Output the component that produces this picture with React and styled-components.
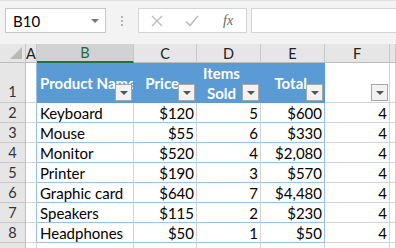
import React from 'react';
import styled, { createGlobalStyle } from 'styled-components';

const GlobalStyle = createGlobalStyle`
  html, body {
    margin: 0;
    background: #fff;
    overflow: hidden;
    font-family: Lato, "Liberation Sans", sans-serif;
  }
`;

const columnWidths = [26, 11, 97, 63, 64, 64, 65];

const rows = [
  ['Keyboard', '$120', 5, '$600', 4],
  ['Mouse', '$55', 6, '$330', 4],
  ['Monitor', '$520', 4, '$2,080', 4],
  ['Printer', '$190', 3, '$570', 4],
  ['Graphic card', '$640', 7, '$4,480', 4],
  ['Speakers', '$115', 2, '$230', 4],
  ['Headphones', '$50', 1, '$50', 4],
];

const Toolbar = styled.div`
  height: 44px;
  background: #f3f3f3;
  border-top: 1px solid #e2e2e2;
  box-sizing: border-box;
  display: flex;
  align-items: flex-start;
  padding: 7px 0 0 5px;
`;

const NameBox = styled.div`
  width: 101px;
  height: 25px;
  box-sizing: border-box;
  background: #fff;
  border: 1px solid #c6c6c6;
  display: flex;
  align-items: center;
  justify-content: space-between;
  padding: 0 6px 0 7px;
  font-size: 15px;
  color: #000;
`;

const SmallCaret = styled.span`
  width: 0;
  height: 0;
  border-left: 4px solid transparent;
  border-right: 4px solid transparent;
  border-top: 4px solid #777;
`;

const Dots = styled.div`
  width: 32px;
  height: 25px;
  display: flex;
  flex-direction: column;
  align-items: center;
  justify-content: center;
  gap: 2px;

  span {
    width: 2px;
    height: 2px;
    background: #b4b4b4;
  }
`;

const ActionBox = styled.div`
  width: 109px;
  height: 25px;
  box-sizing: border-box;
  background: #fff;
  border: 1px solid #d4d4d4;
  display: flex;
  align-items: center;
  padding-left: 12px;
  gap: 22px;
`;

const Fx = styled.span`
  font-family: "Liberation Serif", serif;
  font-style: italic;
  font-size: 14px;
  color: #666;
  margin-left: 2px;
`;

const FormulaInput = styled.div`
  flex: 1;
  height: 25px;
  margin-left: 4px;
  box-sizing: border-box;
  background: #fff;
  border: 1px solid #d4d4d4;
  border-right: none;
`;

const Sheet = styled.div`
  display: grid;
  grid-template-columns: ${columnWidths.map((w) => w + 'px').join(' ')} 1fr;
  grid-template-rows: 19px 40px repeat(8, 20px);
  overflow: hidden;
`;

const ColHead = styled.div`
  box-sizing: border-box;
  background: ${(p) => (p.$active ? '#d2d2d2' : '#e6e6e6')};
  color: ${(p) => (p.$active ? '#1e6b41' : '#222')};
  border-right: 1px solid #c8c8c8;
  border-bottom: ${(p) => (p.$active ? '2px solid #217346' : '1px solid #bdbdbd')};
  display: flex;
  align-items: center;
  justify-content: center;
  font-size: 14.5px;
  position: relative;
`;

const Corner = styled(ColHead)`
  &::after {
    content: '';
    position: absolute;
    right: 3px;
    bottom: 3px;
    width: 0;
    height: 0;
    border-left: 12px solid transparent;
    border-bottom: 12px solid #b9b9b9;
  }
`;

const RowHead = styled.div`
  box-sizing: border-box;
  background: #e6e6e6;
  color: #333;
  border-right: 1px solid #bdbdbd;
  border-bottom: 1px solid #c8c8c8;
  display: flex;
  align-items: ${(p) => (p.$tall ? 'flex-end' : 'center')};
  padding-bottom: ${(p) => (p.$tall ? '2px' : '0')};
  justify-content: center;
  font-size: 14.5px;
`;

const Cell = styled.div`
  box-sizing: border-box;
  position: relative;
  background: ${(p) => (p.$header ? '#5b9bd5' : '#fff')};
  color: ${(p) => (p.$header ? '#fff' : '#000')};
  font-weight: ${(p) => (p.$header ? 700 : 400)};
  font-size: 15px;
  line-height: 20px;
  white-space: ${(p) => (p.$wrap ? 'normal' : 'nowrap')};
  overflow: hidden;
  border-right: 1px solid ${(p) => (p.$header ? '#5b9bd5' : p.$edge ? '#9bc2e6' : '#d4d4d4')};
  border-bottom: 1px solid ${(p) => (p.$header ? '#5b9bd5' : p.$table ? '#9bc2e6' : '#d4d4d4')};
  display: flex;
  align-items: center;
  justify-content: ${(p) => p.$align || 'flex-start'};
  text-align: ${(p) => (p.$align === 'center' ? 'center' : 'left')};
  padding: 0 ${(p) => p.$padRight ?? 2}px 0 3px;
`;

const FilterButton = styled.span`
  position: absolute;
  z-index: 1;
  right: 1px;
  bottom: 1px;
  width: 17px;
  height: 17px;
  box-sizing: border-box;
  background: #f2f2f2;
  border: 1px solid #a6a6a6;
  display: flex;
  align-items: center;
  justify-content: center;

  &::after {
    content: '';
    border-left: 4px solid transparent;
    border-right: 4px solid transparent;
    border-top: 4px solid #555;
    margin-top: 1px;
  }
`;

const CrossIcon = () => (
  <svg width="12" height="12" viewBox="0 0 12 12">
    <path d="M1 1 L11 11 M11 1 L1 11" stroke="#bdbdbd" strokeWidth="1.4" fill="none" />
  </svg>
);

const CheckIcon = () => (
  <svg width="14" height="12" viewBox="0 0 14 12">
    <path d="M1 6.5 L5 10.5 L13 1" stroke="#bdbdbd" strokeWidth="1.6" fill="none" />
  </svg>
);

// left-aligned header runs under its filter button, as in Excel
const headers = [
  { label: 'Product Name', align: 'flex-start', pad: 0 },
  { label: 'Price', align: 'flex-end', pad: 17 },
  { label: 'Items Sold', align: 'center', wrap: true, pad: 17 },
  { label: 'Total', align: 'flex-end', pad: 17 },
];

const App = () => {
  return (
    <>
      <GlobalStyle />
      <Toolbar>
        <NameBox>
          B10
          <SmallCaret />
        </NameBox>
        <Dots>
          <span />
          <span />
          <span />
        </Dots>
        <ActionBox>
          <CrossIcon />
          <CheckIcon />
          <Fx>fx</Fx>
        </ActionBox>
        <FormulaInput />
      </Toolbar>
      <Sheet>
        <Corner />
        <ColHead>A</ColHead>
        <ColHead $active>B</ColHead>
        <ColHead>C</ColHead>
        <ColHead>D</ColHead>
        <ColHead>E</ColHead>
        <ColHead>F</ColHead>
        <ColHead />

        <RowHead $tall>1</RowHead>
        <Cell $edge />
        {headers.map((h) => (
          <Cell key={h.label} $header $align={h.align} $wrap={h.wrap} $padRight={h.pad}>
            {h.label}
            <FilterButton />
          </Cell>
        ))}
        <Cell>
          <FilterButton />
        </Cell>
        <Cell />

        {rows.map((r, i) => (
          <React.Fragment key={r[0]}>
            <RowHead>{i + 2}</RowHead>
            <Cell $edge />
            <Cell $table>{r[0]}</Cell>
            <Cell $table $align="flex-end">{r[1]}</Cell>
            <Cell $table $align="flex-end">{r[2]}</Cell>
            <Cell $table $edge $align="flex-end">{r[3]}</Cell>
            <Cell $align="flex-end">{r[4]}</Cell>
            <Cell />
          </React.Fragment>
        ))}
        <RowHead />
        <Cell />
        <Cell />
        <Cell />
        <Cell />
        <Cell />
        <Cell />
        <Cell />
      </Sheet>
    </>
  );
};

export default App;
